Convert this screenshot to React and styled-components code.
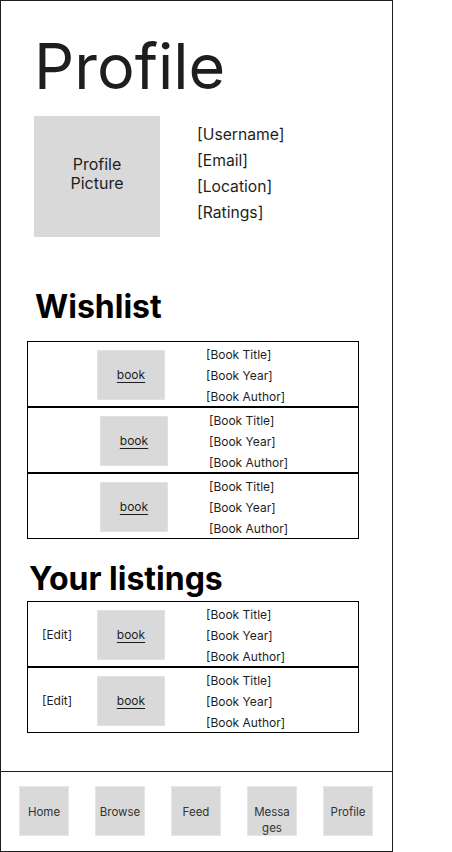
import styled, { createGlobalStyle } from "styled-components";

const GlobalStyle = createGlobalStyle`
  html, body {
    margin: 0;
    padding: 0;
    background: #ffffff;
  }
  body {
    font-family: Inter, "Noto Sans", sans-serif;
    color: #1e1e1e;
  }
`;

const wishlist = [
  { bookShift: 0 },
  { bookShift: 3 },
  { bookShift: 3 },
];

const listings = [{ id: 1 }, { id: 2 }];

const navItems = [["Home"], ["Browse"], ["Feed"], ["Messa", "ges"], ["Profile"]];

const BookRow = ({ edit, shift = 0 }) => (
  <Row>
    <EditCell>{edit && "[Edit]"}</EditCell>
    <BookThumb $shift={shift}>
      <u>book</u>
    </BookThumb>
    <BookInfo $shift={shift}>
      <span>[Book Title]</span>
      <span>[Book Year]</span>
      <span>[Book Author]</span>
    </BookInfo>
  </Row>
);

const App = () => {
  return (
    <>
      <GlobalStyle />
      <Frame>
        <Content>
          <Title>Profile</Title>
          <ProfileRow>
            <ProfilePicture>
              Profile
              <br />
              Picture
            </ProfilePicture>
            <UserInfo>
              <span>[Username]</span>
              <span>[Email]</span>
              <span>[Location]</span>
              <span>[Ratings]</span>
            </UserInfo>
          </ProfileRow>

          <SectionTitle $top={52} $bottom={16} $left={34}>
            Wishlist
          </SectionTitle>
          <Table>
            {wishlist.map((item, i) => (
              <BookRow key={i} shift={item.bookShift} />
            ))}
          </Table>

          <SectionTitle $top={22} $bottom={4} $left={28}>
            Your listings
          </SectionTitle>
          <Table>
            {listings.map((item) => (
              <BookRow key={item.id} edit />
            ))}
          </Table>
        </Content>

        <NavBar>
          {navItems.map((lines) => (
            <NavButton key={lines.join("")}>
              {lines.map((line, i) => (
                <span key={i}>{line}</span>
              ))}
            </NavButton>
          ))}
        </NavBar>
      </Frame>
    </>
  );
};

const Frame = styled.div`
  width: 393px;
  height: 852px;
  box-sizing: border-box;
  border: 1px solid #1e1e1e;
  display: flex;
  flex-direction: column;
  overflow: hidden;
`;

const Content = styled.div`
  flex: 1;
  display: flex;
  flex-direction: column;
`;

const Title = styled.h1`
  margin: 27px 0 0 33px;
  font-size: 63px;
  line-height: 77px;
  font-weight: 400;
  color: #1e1e1e;
`;

const ProfileRow = styled.div`
  display: flex;
  align-items: flex-start;
  margin: 11px 0 0 33px;
  gap: 37px;
`;

const ProfilePicture = styled.div`
  width: 126px;
  height: 121px;
  background: #d9d9d9;
  display: flex;
  align-items: center;
  justify-content: center;
  text-align: center;
  font-size: 16px;
  line-height: 19px;
  padding-bottom: 6px;
  box-sizing: border-box;
`;

const UserInfo = styled.div`
  display: flex;
  flex-direction: column;
  margin-top: 6px;
  font-size: 15.7px;
  line-height: 26px;
`;

const SectionTitle = styled.h2`
  margin: ${(p) => p.$top}px 0 ${(p) => p.$bottom}px ${(p) => p.$left}px;
  font-size: 32px;
  line-height: 36px;
  font-weight: 700;
  color: #000000;
`;

const Table = styled.div`
  margin-left: 26px;
  width: 332px;
  box-sizing: border-box;
  border: 1px solid #000000;
  display: flex;
  flex-direction: column;
`;

const Row = styled.div`
  height: 64px;
  display: grid;
  grid-template-columns: 69px 68px 1fr;
  align-items: center;
  font-size: 12px;
  color: #1e1e1e;

  & + & {
    border-top: 2px solid #000000;
  }
`;

const EditCell = styled.div`
  padding-left: 14px;
  font-size: 12px;
  line-height: 16px;
`;

const BookThumb = styled.div`
  width: 68px;
  height: 50px;
  box-sizing: border-box;
  background: #d9d9d9;
  border: 1px solid #e2e2e2;
  display: flex;
  align-items: center;
  justify-content: center;
  margin-left: ${(p) => p.$shift}px;
  font-size: 12px;

  u {
    text-underline-offset: 3px;
  }
`;

const BookInfo = styled.div`
  align-self: start;
  display: flex;
  flex-direction: column;
  padding-left: ${(p) => 41 + p.$shift}px;
  padding-top: 2px;
  line-height: 21px;
`;

const NavBar = styled.nav`
  height: 80px;
  border-top: 1px solid #1e1e1e;
  display: flex;
  align-items: flex-start;
  padding: 14px 0 0 18px;
  gap: 26px;
  box-sizing: border-box;
`;

const NavButton = styled.div`
  width: 50px;
  height: 50px;
  box-sizing: border-box;
  background: #d9d9d9;
  border: 1px solid #e6e6e6;
  display: flex;
  flex-direction: column;
  align-items: center;
  padding-top: 17px;
  font-size: 11.5px;
  line-height: 16px;
  color: #333333;
`;

export default App;
